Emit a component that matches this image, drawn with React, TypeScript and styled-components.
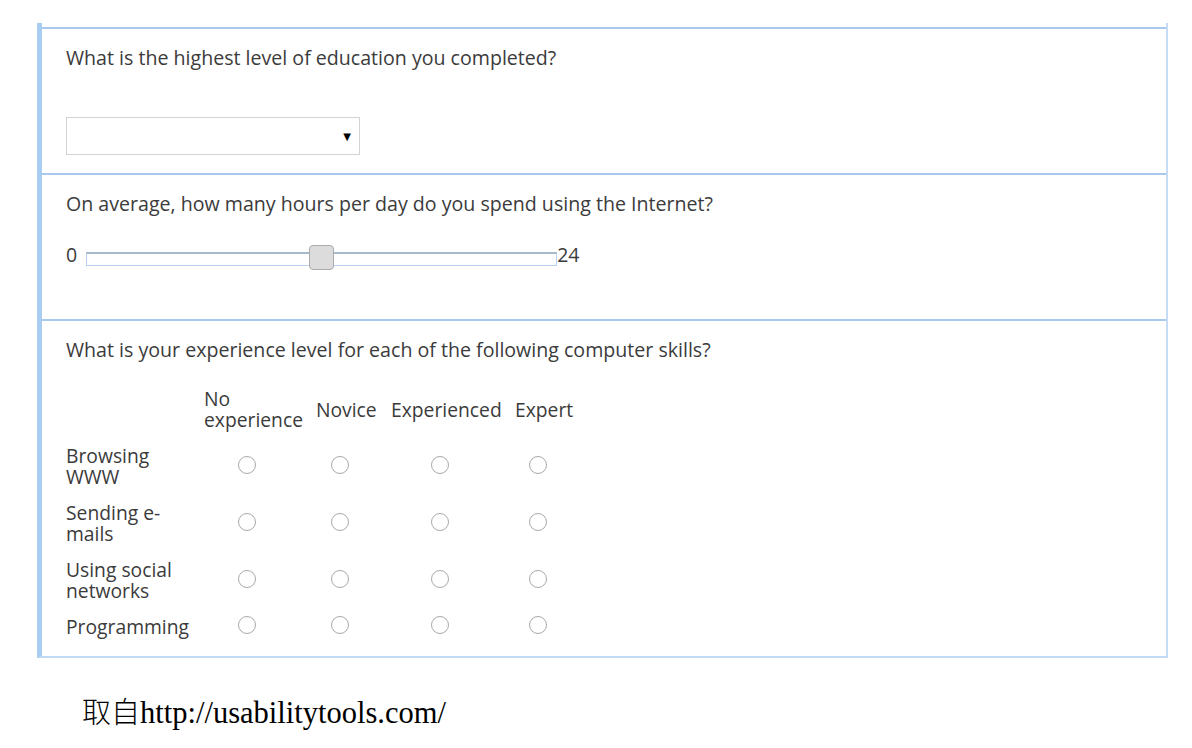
import React from "react";
import styled, { createGlobalStyle } from "styled-components";

const Global = createGlobalStyle`
  html, body { margin: 0; padding: 0; background: #ffffff; }
  body { font-family: "Open Sans", "Liberation Sans", sans-serif; color: #3b3b3b; }
`;

const Survey = styled.div`
  margin: 23px 0 0 37px;
  width: 1124px;
  padding-top: 4px;
  border-left: 5px solid #a9cdf1;
  border-right: 2px solid #c6dcf4;
  border-bottom: 2px solid #c2d9f3;
`;

const Section = styled.section<{ $pb: number }>`
  border-top: 2px solid #a8c9ee;
  padding: 16px 24px ${(p) => p.$pb}px 24px;
`;

const Question = styled.div`
  font-size: 19.6px;
  line-height: 25px;
  color: #3b3b3b;
`;

const Select = styled.div`
  margin-top: 47px;
  width: 284px;
  height: 36px;
  border: 1px solid #d3d3d3;
  display: flex;
  align-items: center;
  justify-content: flex-end;
  padding-right: 8px;
  box-sizing: content-box;
`;

const Arrow = styled.span`
  font-size: 10px;
  color: #000;
  font-family: "DejaVu Sans", sans-serif;
`;

const SliderRow = styled.div`
  margin-top: 29px;
  display: flex;
  align-items: center;
  font-size: 19.5px;
  height: 26px;
`;

const Label = styled.span`
  line-height: 21px;
  position: relative;
  top: -4px;
`;

const Track = styled.div`
  position: relative;
  margin-left: 9px;
  width: 469px;
  height: 11px;
  border: 1px solid #b8d2ef;
  border-top: 2px solid #a9b9cc;
  box-sizing: content-box;
  margin-top: 1px;
`;

const Thumb = styled.div`
  position: absolute;
  left: 222px;
  top: -9px;
  width: 23px;
  height: 23px;
  background: #dcdcdc;
  border: 1px solid #ababab;
  border-radius: 4px;
`;

const Matrix = styled.div`
  margin-top: 26px;
  display: grid;
  grid-template-columns: 123px 97px 60px 109px 57px;
  column-gap: 15px;
  row-gap: 15px;
  font-size: 19.3px;
  line-height: 21px;
  align-items: center;
`;

const Head = styled.div<{ $center?: boolean }>`
  align-self: ${(p) => (p.$center ? "center" : "end")};
  white-space: nowrap;
`;

const RowLabel = styled.div`
  white-space: nowrap;
`;

const Radio = styled.span`
  justify-self: center;
  margin-right: 12px;
  margin-top: -3px;
  width: 16px;
  height: 16px;
  border: 1px solid #a9a9a9;
  border-radius: 50%;
  background: #fff;
`;

const Footer = styled.div`
  margin: 35px 0 0 82px;
  font-family: "Liberation Serif", "Noto Sans CJK SC", serif;
  font-size: 30.5px;
  line-height: 34px;
  color: #000;
`;

const Cjk = styled.span`
  font-family: "Noto Sans CJK SC", serif;
  font-weight: 300;
  font-size: 29px;
`;

const rows: string[][] = [
  ["Browsing", "WWW"],
  ["Sending e-", "mails"],
  ["Using social", "networks"],
  ["Programming"],
];

export default function App() {
  return (
    <>
      <Global />
      <Survey>
        <Section $pb={18}>
          <Question>What is the highest level of education you completed?</Question>
          <Select>
            <Arrow>▼</Arrow>
          </Select>
        </Section>
        <Section $pb={48}>
          <Question>On average, how many hours per day do you spend using the Internet?</Question>
          <SliderRow>
            <Label>0</Label>
            <Track>
              <Thumb />
            </Track>
            <Label>24</Label>
          </SliderRow>
        </Section>
        <Section $pb={19}>
          <Question>What is your experience level for each of the following computer skills?</Question>
          <Matrix>
            <Head />
            <Head>No<br />experience</Head>
            <Head $center>Novice</Head>
            <Head $center>Experienced</Head>
            <Head $center>Expert</Head>
            {rows.map((lines) => (
              <React.Fragment key={lines.join(" ")}>
                <RowLabel>
                  {lines.map((l, i) => (
                    <React.Fragment key={i}>
                      {i > 0 && <br />}
                      {l}
                    </React.Fragment>
                  ))}
                </RowLabel>
                <Radio />
                <Radio />
                <Radio />
                <Radio />
              </React.Fragment>
            ))}
          </Matrix>
        </Section>
      </Survey>
      <Footer>
        <Cjk>取自</Cjk>http://usabilitytools.com/
      </Footer>
    </>
  );
}
